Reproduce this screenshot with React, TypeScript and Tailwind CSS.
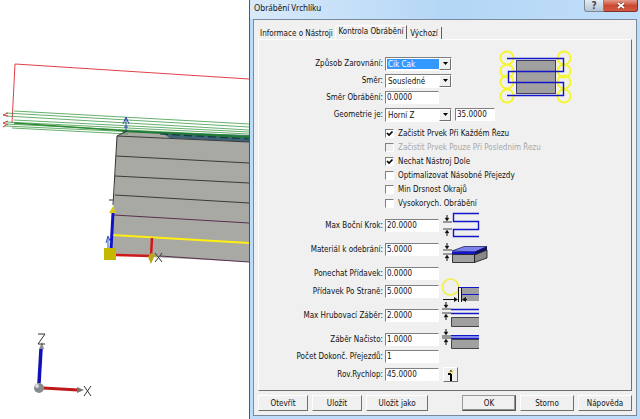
import React from "react";

const INK = "#111111";
const BLUE = "#1414c8";

const greenLines: [number, number, number, number][] = [
  [14, 111, 249, 124],
  [6, 113, 249, 127],
  [6, 116, 249, 130],
  [14, 120, 249, 132],
  [6, 122, 249, 134],
  [6, 124, 249, 136],
  [4, 126, 249, 137],
  [12, 128, 128, 134],
];

const layerLines: [number, number, number, number][] = [
  [117, 136, 249, 142],
  [116, 156, 249, 163],
  [115, 176, 249, 183],
  [115, 195, 249, 203],
];

function Viewport() {
  return (
    <svg
      viewBox="0 0 249 419"
      preserveAspectRatio="xMinYMin slice"
      className="block h-full w-full bg-white"
      role="img"
      aria-label="3D model"
    >
      <polygon points="117,136 127,130 249,137 249,262 111,255" fill="#a9a9a3" />
      <path d="M160 132L249 135V142L170 138Z" fill="#3f6478" />
      <path d="M249 79L15 64L12 123" fill="none" stroke="#e0404a" strokeWidth="1" />
      {greenLines.map(([x1, y1, x2, y2], i) => (
        <line key={i} x1={x1} y1={y1} x2={x2} y2={y2} stroke="#3f9a48" strokeWidth="0.8" />
      ))}
      <path d="M14 123L128 131" stroke="#2f8a38" strokeWidth="1.6" />
      <path d="M122 131L249 137" stroke="#1f7a35" strokeWidth="2" />
      <path d="M160 134L249 139" stroke="#143c40" strokeWidth="1.2" strokeDasharray="8 4" />
      <path d="M8 113L3 115L8 116M8 121L3 123L8 125M6 125L3 127" fill="none" stroke="#d04040" strokeWidth="1" />
      {layerLines.map(([x1, y1, x2, y2], i) => (
        <line key={i} x1={x1} y1={y1} x2={x2} y2={y2} stroke="#3a3a3a" strokeWidth="1" />
      ))}
      <path d="M114 215L249 223M160 256L249 262" stroke="#57304f" strokeWidth="1" />
      <path d="M117 136L113 205M117 136L127 131" fill="none" stroke="#333" strokeWidth="1" />
      <path d="M112 235L249 243" stroke="#ffee10" strokeWidth="2" />
      <path d="M126 131V118M123 124L126 117L129 124M124 127H128" fill="none" stroke="#2848a8" strokeWidth="1" />
      <path d="M113 213L111 249" stroke="#1010c8" strokeWidth="3" />
      <path d="M106 243L108 236L111 243M108 237V248" fill="none" stroke="#3050c0" strokeWidth="1" />
      <path d="M109 213L113 206L116 213Z" fill="#d8cc10" />
      <path d="M109 200H113" stroke="#333" strokeWidth="1" />
      <path d="M116 255L151 256L152 238" fill="none" stroke="#d01818" strokeWidth="2.5" />
      <path d="M148 257L151 264L154 257L157 256L151 253Z" fill="#b8a818" />
      <path d="M155 253L162 262M162 253L155 262" stroke="#333" strokeWidth="1" />
      <rect x="104" y="248" width="12" height="12" fill="#c4b800" />

      <path d="M41 349L39 383" stroke="#1010b8" strokeWidth="3.5" />
      <path d="M39 349L42 342L44 349Z" fill="#8c8c98" />
      <path d="M43 388L78 390" stroke="#c01818" strokeWidth="3" />
      <path d="M77 387L84 390L77 393Z" fill="#777" />
      <circle cx="39" cy="388" r="5" fill="#868b8e" />
      <circle cx="37" cy="386" r="2" fill="#d8dcde" />
      <path d="M38 334H45L38 344H45M84 386L91 396M91 386L84 396" fill="none" stroke="#333" strokeWidth="1" />
    </svg>
  );
}

function ZigZagFigure() {
  return (
    <svg width="74" height="56" viewBox="499 50 74 56" className="shrink-0" aria-hidden="true">
      {[58, 71, 82, 96].map((y) => (
        <g key={y} fill="none" stroke="#f6f62c" strokeWidth="2">
          <circle cx="507" cy={y} r="6.5" />
          <circle cx="564" cy={y} r="6.5" />
        </g>
      ))}
      <rect x="516.5" y="60.5" width="39" height="33" fill="#a0a0a0" stroke="#3c3c64" />
      <path d="M507 58.5H563.5V71.5H508.5V82.5H563.5V95.5H507" fill="none" stroke={BLUE} strokeWidth="1.4" />
    </svg>
  );
}

function Gauge({ x, top, bottom }: { x: number; top: number; bottom: number }) {
  return (
    <g stroke={INK} fill={INK}>
      <path d={`M${x - 4} ${top}H${x + 5}M${x - 4} ${bottom}H${x + 5}`} strokeWidth="0.8" />
      <path d={`M${x} ${top - 7}V${top - 2}M${x} ${bottom + 2}V${bottom + 7}`} strokeWidth="1" />
      <path d={`M${x - 2} ${top - 4}H${x + 2}L${x} ${top - 1}Z`} strokeWidth="0.4" />
      <path d={`M${x - 2} ${bottom + 4}H${x + 2}L${x} ${bottom + 1}Z`} strokeWidth="0.4" />
    </g>
  );
}

function FieldIcon({ top, children }: { top: number; children: React.ReactNode }) {
  return (
    <svg width="48" height="29" viewBox={`442 ${top} 48 29`} className="ml-[3px] shrink-0" aria-hidden="true">
      {children}
    </svg>
  );
}

const StepIcon = () => (
  <FieldIcon top={211}>
    <Gauge x={447} top={222} bottom={229} />
    <path d="M479 213.5H453.5V221.5H478.5V229.5H453.5V236.5H479" fill="none" stroke={BLUE} strokeWidth="1.4" />
  </FieldIcon>
);

const StockIcon = () => (
  <FieldIcon top={235}>
    <Gauge x={447} top={250} bottom={254} />
    <path d="M452 251L464 246.500H487L475 252Z" fill="#7c84ec" stroke="#101050" strokeWidth="0.7" />
    <path d="M452 251.500H475V254.500H452Z" fill={BLUE} />
    <path d="M475 251.500L487 246.500V250L475 255Z" fill="#10106c" />
    <path d="M452.500 254.500H474.500V262.500H452.500Z" fill="#a0a0a0" stroke={INK} strokeWidth="0.8" />
    <path d="M474.500 255L487 250V258L474.500 262.500Z" fill="#888" stroke={INK} strokeWidth="0.8" />
  </FieldIcon>
);

const SideIcon = () => (
  <FieldIcon top={277}>
    <circle cx="450.5" cy="287" r="8" fill="none" stroke="#f2ee48" strokeWidth="1.6" />
    <rect x="461" y="287" width="18" height="14" fill="#a0a0a0" />
    <path d="M458 287.500H479M461 294.500H479" stroke={BLUE} strokeWidth="1.2" />
    <path d="M458.500 287V302M461.500 288V302M443 299.500H456M465 299.500H467" stroke={INK} />
    <path d="M454 297V302L458 299.500ZM466 297V302L462 299.500Z" fill={INK} />
  </FieldIcon>
);

const RoughIcon = () => (
  <FieldIcon top={301}>
    <Gauge x={446} top={309} bottom={313} />
    <path d="M451 309.500H479M451 313.500H479" stroke={BLUE} strokeWidth="1.3" />
    <path d="M479 317.500H451.500V326.500H479" fill="#a0a0a0" stroke="#444" />
  </FieldIcon>
);

const FinishIcon = () => (
  <FieldIcon top={325}>
    <Gauge x={446} top={336} bottom={338} />
    <rect x="451" y="335" width="28" height="3" fill="#8088e8" />
    <path d="M451 335.500H479M451 338.500H479" stroke={BLUE} />
    <path d="M479 339.500H451.500V348.500H479" fill="#a0a0a0" stroke="#444" />
  </FieldIcon>
);

const sunken = "border border-t-[#808080] border-l-[#808080] border-r-white border-b-white bg-white";
const raised = "border border-t-white border-l-white border-r-[#707070] border-b-[#707070] bg-[#f0f0f0]";

function Row({
  id,
  label,
  gap = "",
  children,
}: {
  id: string;
  label: string;
  gap?: string;
  children: React.ReactNode;
}) {
  return (
    <div className={`flex h-[17px] items-center ${gap}`}>
      <label htmlFor={id} className="mr-[2px] w-[124px] shrink-0 whitespace-nowrap text-right">
        {label}:
      </label>
      {children}
    </div>
  );
}

function NumberBox({ id, value, narrow, label }: { id: string; value: string; narrow?: boolean; label?: string }) {
  return (
    <input
      id={id}
      aria-label={label}
      defaultValue={value}
      className={`h-[13px] shrink-0 px-px outline-none ${narrow ? "ml-[3px] w-[40px]" : "w-[54px]"} ${sunken}`}
    />
  );
}

function Combo({ id, options, active }: { id: string; options: string[]; active?: boolean }) {
  return (
    <span className={`relative flex h-[14px] w-[67px] shrink-0 p-px ${sunken}`}>
      <select
        id={id}
        className={`h-full w-[52px] appearance-none pl-px outline-none ${active ? "bg-[#3399ff] text-white" : "bg-white"}`}
      >
        {options.map((o) => (
          <option key={o}>{o}</option>
        ))}
      </select>
      <span className={`pointer-events-none absolute inset-y-0 right-0 flex w-[12px] items-center justify-center ${raised}`}>
        <svg width="5" height="3" viewBox="0 0 5 3" aria-hidden="true">
          <path d="M0 0H5L2.500 3Z" fill="#000" />
        </svg>
      </span>
    </span>
  );
}

function Check({ label, checked, disabled }: { label: string; checked?: boolean; disabled?: boolean }) {
  return (
    <label className={`flex h-[14px] items-center whitespace-nowrap ${disabled ? "text-[#a8a8a8]" : ""}`}>
      <span className="relative mr-[4px] block h-[9px] w-[9px]">
        <input
          type="checkbox"
          defaultChecked={checked}
          disabled={disabled}
          className={`peer block h-full w-full appearance-none ${sunken} disabled:bg-[#f0f0f0]`}
        />
        <svg
          viewBox="0 0 9 9"
          className="pointer-events-none absolute inset-0 hidden peer-checked:block"
          aria-hidden="true"
        >
          <path d="M2 4L4 6L7.500 2.500" fill="none" stroke="#000" strokeWidth="1.7" />
        </svg>
      </span>
      {label}
    </label>
  );
}

function PushButton({ children, width, primary }: { children: string; width: string; primary?: boolean }) {
  return (
    <button
      type="button"
      className={`h-[16px] whitespace-nowrap ${width} ${
        primary ? "border border-t-[#999] border-l-[#999] border-r-[#555] border-b-[#555] bg-[#f0f0f0] shadow-[inset_-1px_-1px_0_#909090]" : raised
      }`}
    >
      {children}
    </button>
  );
}

function Dialog() {
  return (
    <section className="flex min-h-screen flex-col border-l border-[#46586c] bg-[#bcdcfa] pr-[3px] pb-[3px] pl-[3px]">
      <header className="-mx-[3px] flex h-[19px] items-start justify-between bg-linear-to-r from-[#d8eafa] via-[#b4d6f6] to-[#c0defa] pr-[2px] pl-[4px]">
        <h1 className="pt-[2px] font-['Noto_Sans',sans-serif] text-[8px] leading-[11px] text-[#111]">Obrábění Vrchlíku</h1>
        <div className="flex h-[12px]">
          <button
            type="button"
            aria-label="Help"
            className="w-[20px] rounded-bl-[3px] border border-t-0 border-[#7c8894] bg-linear-to-b from-[#e4ecf4] to-[#b4c4d4] text-[10px] leading-[10px] font-bold text-[#445]"
          >
            ?
          </button>
          <button
            type="button"
            aria-label="Close"
            className="flex w-[34px] items-center justify-center rounded-br-[3px] border border-t-0 border-l-0 border-[#80302c] bg-linear-to-b from-[#e09c8c] via-[#cc4830] to-[#d05a40]"
          >
            <svg width="8" height="7" viewBox="0 0 8 7" aria-hidden="true">
              <path d="M1 1L7 6M7 1L1 6" stroke="#803028" strokeWidth="3" />
              <path d="M1 1L7 6M7 1L1 6" stroke="#fff" strokeWidth="1.800" />
            </svg>
          </button>
        </div>
      </header>

      <div className="flex flex-1 flex-col border border-[#7a8a9a] bg-[#f0f0f0] px-[4px] pt-[5px] pb-[4px]">
        <div role="tablist" className="flex h-[14px] items-end">
          <button type="button" role="tab" className="h-[12px] w-[77px] whitespace-nowrap">
            Informace o Nástroji
          </button>
          <button
            type="button"
            role="tab"
            aria-selected="true"
            className="h-[14px] w-[72px] border-t border-r border-l border-t-white border-r-[#606060] border-l-white pb-[2px] whitespace-nowrap"
          >
            Kontrola Obrábění
          </button>
          <button type="button" role="tab" className="h-[12px] w-[35px] border-r border-[#606060] whitespace-nowrap">
            Výchozí
          </button>
        </div>

        <form className="flex-1 border border-t-white border-r-[#707070] border-b-[#707070] border-l-white pt-[10px]">
          <div className="flex">
            <div className="pt-[5px]">
              <Row id="align" label="Způsob Zarovnání">
                <Combo id="align" options={["Cik Cak"]} active />
              </Row>
              <Row id="dir" label="Směr">
                <Combo id="dir" options={["Sousledné"]} />
              </Row>
              <Row id="cutdir" label="Směr Obrábění">
                <NumberBox id="cutdir" value="0.0000" />
              </Row>
              <Row id="geom" label="Geometrie je">
                <Combo id="geom" options={["Horní Z"]} />
                <NumberBox id="geomz" label="Z" value="35.0000" narrow />
              </Row>
            </div>
            <div className="ml-[4px]">
              <ZigZagFigure />
            </div>
          </div>

          <div className="mt-[3px] ml-[126px]">
            <Check label="Začistit Prvek Při Každém Řezu" checked />
            <Check label="Začistit Prvek Pouze Při Posledním Řezu" disabled />
            <Check label="Nechat Nástroj Dole" checked />
            <Check label="Optimalizovat Násobné Přejezdy" />
            <Check label="Min Drsnost Okrajů" />
            <Check label="Vysokorych. Obrábění" />
          </div>

          <Row id="step" label="Max Boční Krok" gap="mt-[7px]">
            <NumberBox id="step" value="20.0000" />
            <StepIcon />
          </Row>
          <Row id="stock" label="Materiál k odebrání" gap="mt-[7px]">
            <NumberBox id="stock" value="5.0000" />
            <StockIcon />
          </Row>
          <Row id="leave" label="Ponechat Přídavek" gap="mt-[7px]">
            <NumberBox id="leave" value="0.0000" />
          </Row>
          <Row id="side" label="Přídavek Po Straně" gap="mt-px">
            <NumberBox id="side" value="5.0000" />
            <SideIcon />
          </Row>
          <Row id="rough" label="Max Hrubovací Záběr" gap="mt-[7px]">
            <NumberBox id="rough" value="2.0000" />
            <RoughIcon />
          </Row>
          <Row id="finish" label="Záběr Načisto" gap="mt-[7px]">
            <NumberBox id="finish" value="1.0000" />
            <FinishIcon />
          </Row>
          <Row id="passes" label="Počet Dokonč. Přejezdů">
            <NumberBox id="passes" value="1" />
          </Row>
          <Row id="rapid" label="Rov.Rychlop" gap="mt-px">
            <NumberBox id="rapid" value="45.0000" />
            <button
              type="button"
              aria-label="Rov.Rychlop"
              className={`ml-[4px] flex h-[15px] w-[15px] items-center justify-center ${raised}`}
            >
              <svg width="11" height="12" viewBox="0 0 11 12" aria-hidden="true">
                <circle cx="6" cy="3" r="2.500" fill="#ece48c" />
                <path d="M3 5H6M6 5V12" fill="none" stroke="#000" strokeWidth="2" />
                <path d="M5 2H7" stroke="#555" strokeWidth="1.500" />
              </svg>
            </button>
          </Row>
        </form>

        <footer className="mt-[4px] flex justify-between">
          <div className="flex gap-[4px]">
            <PushButton width="w-[50px]">Otevřít</PushButton>
            <PushButton width="w-[50px]">Uložit</PushButton>
            <PushButton width="w-[62px]">Uložit jako</PushButton>
          </div>
          <div className="flex gap-[4px]">
            <PushButton width="w-[54px]" primary>
              OK
            </PushButton>
            <PushButton width="w-[54px]">Storno</PushButton>
            <PushButton width="w-[54px]">Nápověda</PushButton>
          </div>
        </footer>
      </div>
    </section>
  );
}

export default function App() {
  return (
    <main className="grid min-h-screen grid-cols-[249fr_391fr] bg-white font-['DejaVu_Sans_Condensed','Liberation_Sans',sans-serif] text-[8px] leading-[11px] text-[#111]">
      <Viewport />
      <Dialog />
    </main>
  );
}
